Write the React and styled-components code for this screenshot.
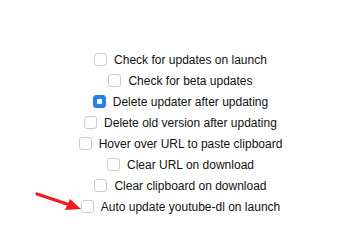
import React from "react";
import styled, { createGlobalStyle } from "styled-components";

const Global = createGlobalStyle`
  html, body { margin: 0; padding: 0; background: #ffffff; }
  body { font-family: "Liberation Sans", Arial, sans-serif; }
`;

const Page = styled.div`
  position: relative;
  width: 364px;
  height: 249px;
  box-sizing: border-box;
  padding: 49px 3px 0 0;
  display: flex;
  flex-direction: column;
  align-items: center;
`;

const Row = styled.label`
  height: 21px;
  display: flex;
  align-items: center;
  gap: 7px;
  font-size: 12px;
  color: #111111;
  white-space: nowrap;
`;

const Box = styled.span`
  width: 11px;
  height: 11px;
  border: 1px solid ${(p) => (p.$checked ? "#2a7ee8" : "#cccccc")};
  background: ${(p) => (p.$checked ? "#2a7ee8" : "#ffffff")};
  border-radius: 3px;
  display: flex;
  align-items: center;
  justify-content: center;
  flex: none;
`;

const Dot = styled.span`
  width: 5px;
  height: 5px;
  background: #ffffff;
  border-radius: 1px;
`;

const Arrow = styled.svg`
  position: absolute;
  left: 34px;
  top: 188px;
  width: 50px;
  height: 28px;
`;

const items = [
  { text: "Check for updates on launch" },
  { text: "Check for beta updates" },
  { text: "Delete updater after updating", checked: true },
  { text: "Delete old version after updating" },
  { text: "Hover over URL to paste clipboard" },
  { text: "Clear URL on download" },
  { text: "Clear clipboard on download" },
  { text: "Auto update youtube-dl on launch" },
];

export default function App() {
  return (
    <>
      <Global />
      <Page>
        {items.map((it) => (
          <Row key={it.text}>
            <Box $checked={it.checked}>{it.checked && <Dot />}</Box>
            {it.text}
          </Row>
        ))}
        <Arrow viewBox="0 0 50 28">
          <line x1="3" y1="6" x2="36" y2="17" stroke="#ee1c1c" strokeWidth="3.2" strokeLinecap="round" />
          <polygon points="47,21 31,22 36,11" fill="#ee1c1c" />
        </Arrow>
      </Page>
    </>
  );
}
